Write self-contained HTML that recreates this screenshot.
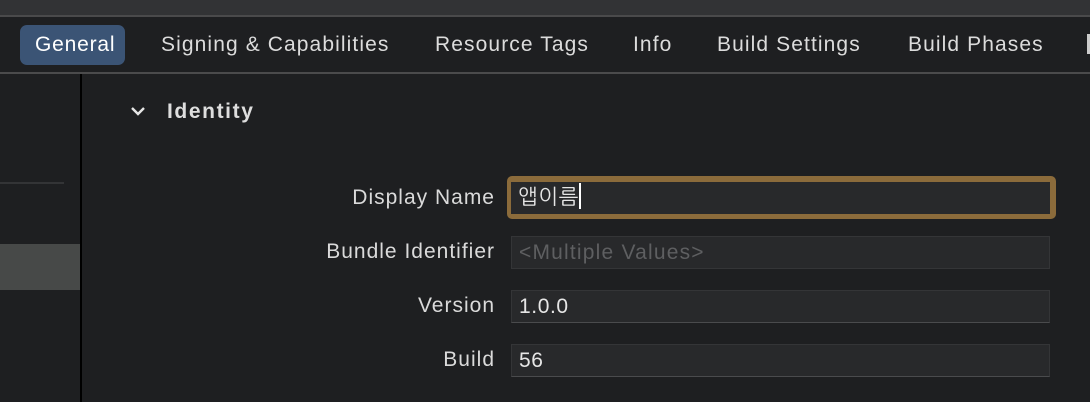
<!DOCTYPE html>
<html><head><style>
*{margin:0;padding:0;box-sizing:border-box}
body{width:1090px;height:402px;overflow:hidden;background:#1e1f21;font-family:"Liberation Sans","NanumGothic","Noto Sans CJK KR",sans-serif;color:#e2e2e2;position:relative}
.a{position:absolute}
.tab{position:absolute;top:33px;font-size:21px;letter-spacing:1.1px;color:#dcdcdc;white-space:nowrap}
.lbl{position:absolute;right:595px;font-size:21px;letter-spacing:1px;color:#dadada;white-space:nowrap}
.inp{position:absolute;left:511px;width:539px;height:32px;background:#28292b;border:1px solid #343537;border-bottom:1px solid #4a4b4d;font-size:21px;letter-spacing:0.6px;padding:4px 0 0 7px;color:#e6e6e6}
</style></head><body>
<div class="a" style="left:0;top:0;width:1090px;height:15px;background:#323335"></div>
<div class="a" style="left:0;top:15px;width:1090px;height:2px;background:#4a4a4b"></div>
<div class="a" style="left:0;top:72px;width:1090px;height:2px;background:#4b4b4c"></div>
<div class="a" style="left:20px;top:25px;width:105px;height:40px;background:#3b5475;border-radius:7px"></div>
<div class="tab" style="left:35px;color:#fff;letter-spacing:0.8px">General</div>
<div class="tab" style="left:161px">Signing &amp; Capabilities</div>
<div class="tab" style="left:435px">Resource Tags</div>
<div class="tab" style="left:633px">Info</div>
<div class="tab" style="left:717px">Build Settings</div>
<div class="tab" style="left:908px">Build Phases</div>
<div class="a" style="left:1087px;top:34px;width:3px;height:20px;background:#ccc"></div>
<div class="a" style="left:80px;top:74px;width:2px;height:328px;background:#000"></div>
<div class="a" style="left:0;top:182px;width:64px;height:2px;background:#333436"></div>
<div class="a" style="left:0;top:244px;width:80px;height:46px;background:#474948"></div>
<svg class="a" style="left:130px;top:105px" width="16" height="12"><path d="M2 3 L8 9 L14 3" stroke="#e6e6e6" stroke-width="2.4" fill="none"/></svg>
<div class="a" style="left:167px;top:100px;font-size:21px;letter-spacing:1.6px;font-weight:bold;color:#dedede">Identity</div>
<div class="lbl" style="top:186px">Display Name</div>
<div class="lbl" style="top:240px">Bundle Identifier</div>
<div class="lbl" style="top:294px">Version</div>
<div class="lbl" style="top:348px">Build</div>
<div class="a" style="left:507px;top:176px;width:549px;height:43px;background:#8b6b3b;border-radius:5px"></div>
<div class="inp" style="top:182px;border:none;background:#28292b;padding-top:3px"><span>앱이름</span><span style="display:inline-block;width:2px;height:26px;background:#fff;vertical-align:middle;margin-top:-4px"></span></div>
<div class="inp" style="top:236px;height:33px;color:#5e5f61;border-bottom-color:#343537;letter-spacing:1.2px">&lt;Multiple Values&gt;</div>
<div class="inp" style="top:290px;height:33px">1.0.0</div>
<div class="inp" style="top:344px;height:33px">56</div>
</body></html>
